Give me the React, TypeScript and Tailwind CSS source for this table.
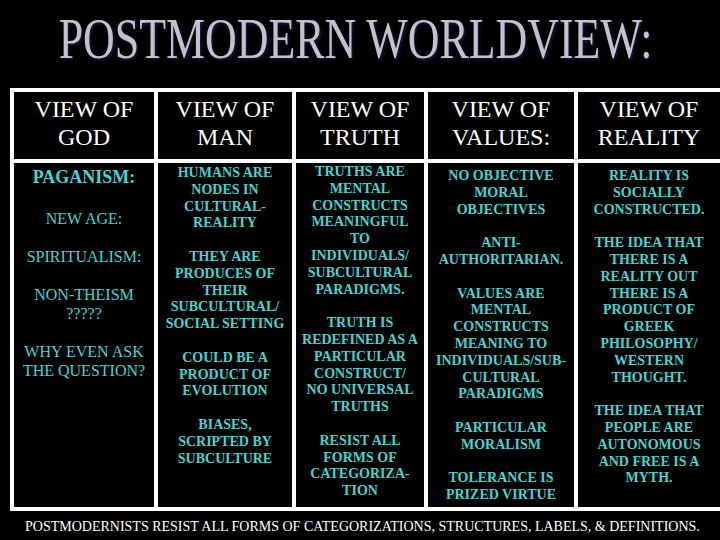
const headers = [
  ["VIEW OF", "GOD"],
  ["VIEW OF", "MAN"],
  ["VIEW OF", "TRUTH"],
  ["VIEW OF", "VALUES:"],
  ["VIEW OF", "REALITY"],
];

// "" = blank line between paragraphs
const manCol = [
  "HUMANS ARE", "NODES IN", "CULTURAL-", "REALITY", "",
  "THEY ARE", "PRODUCES OF", "THEIR", "SUBCULTURAL/", "SOCIAL SETTING", "",
  "COULD BE A", "PRODUCT OF", "EVOLUTION", "",
  "BIASES,", "SCRIPTED BY", "SUBCULTURE",
];

const truthCol = [
  "TRUTHS ARE", "MENTAL", "CONSTRUCTS", "MEANINGFUL", "TO", "INDIVIDUALS/", "SUBCULTURAL", "PARADIGMS.", "",
  "TRUTH IS", "REDEFINED AS A", "PARTICULAR", "CONSTRUCT/", "NO UNIVERSAL", "TRUTHS", "",
  "RESIST ALL", "FORMS OF", "CATEGORIZA-", "TION",
];

const valuesCol = [
  "NO OBJECTIVE", "MORAL", "OBJECTIVES", "",
  "ANTI-", "AUTHORITARIAN.", "",
  "VALUES ARE", "MENTAL", "CONSTRUCTS", "MEANING TO", "INDIVIDUALS/SUB-", "CULTURAL", "PARADIGMS", "",
  "PARTICULAR", "MORALISM", "",
  "TOLERANCE IS", "PRIZED VIRTUE",
];

const realityCol = [
  "REALITY IS", "SOCIALLY", "CONSTRUCTED.", "",
  "THE IDEA THAT", "THERE IS A", "REALITY OUT", "THERE IS A", "PRODUCT OF", "GREEK", "PHILOSOPHY/", "WESTERN", "THOUGHT.", "",
  "THE IDEA THAT", "PEOPLE ARE", "AUTONOMOUS", "AND FREE IS A", "MYTH.",
];

function Lines({ lines }: { lines: string[] }) {
  return (
    <div className="text-center text-[14px] leading-[16.8px] font-bold whitespace-nowrap text-[#45d4d4]">
      {lines.map((l, i) => (
        <div key={i} className="h-[16.8px]">
          {l}
        </div>
      ))}
    </div>
  );
}

export default function App() {
  return (
    <div className="w-[720px] h-[540px] bg-black overflow-hidden font-serif">
      <div className="font-[Liberation_Serif,serif]">
        {/* title */}
        <div className="h-[88px] pt-[10px] flex justify-center">
          <h1 className="text-[57px] leading-[57px] font-normal text-[#c2c2cc] scale-x-[0.77] whitespace-nowrap [text-shadow:2px_2px_3px_#16163f] ml-[-8px]">
            POSTMODERN WORLDVIEW:
          </h1>
        </div>

        {/* table */}
        <div className="ml-[10px] w-[710px] bg-white pl-[4px] py-[4px] grid grid-cols-[140px_134px_128px_146px_142px] grid-rows-[67px_344px] gap-[4px]">
          {headers.map(([a, b], i) => (
            <div key={i} className="bg-black pt-[3px] text-center text-white text-[24px] leading-[28px]">
              <div>{a}</div>
              <div>{b}</div>
            </div>
          ))}

          {/* god */}
          <div className="bg-black pt-[5px] text-center text-[#45d4d4] whitespace-nowrap">
            <div className="text-[18px] leading-[19px] font-bold mb-[22px]">PAGANISM:</div>
            <div className="text-[16px] leading-[19px]">
              <div>NEW AGE:</div>
              <div className="h-[19px]" />
              <div>SPIRITUALISM:</div>
              <div className="h-[19px]" />
              <div>NON-THEISM</div>
              <div>?????</div>
              <div className="h-[19px]" />
              <div>WHY EVEN ASK</div>
              <div>THE QUESTION?</div>
            </div>
          </div>

          <div className="bg-black pt-[2px]">
            <Lines lines={manCol} />
          </div>
          <div className="bg-black pt-[1px]">
            <Lines lines={truthCol} />
          </div>
          <div className="bg-black pt-[5px]">
            <Lines lines={valuesCol} />
          </div>
          <div className="bg-black pt-[5px]">
            <Lines lines={realityCol} />
          </div>
        </div>

        {/* footer */}
        <div className="pt-[8px] pl-[25px] text-white text-[14px] leading-[16px] whitespace-nowrap">
          POSTMODERNISTS RESIST ALL FORMS OF CATEGORIZATIONS, STRUCTURES, LABELS, &amp; DEFINITIONS.
        </div>
      </div>
    </div>
  );
}
